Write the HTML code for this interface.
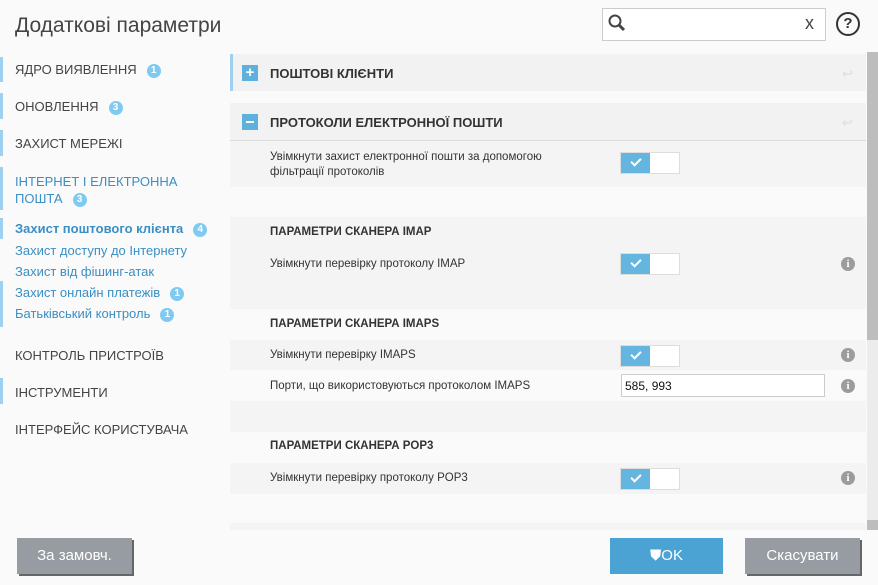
<!DOCTYPE html>
<html><head><meta charset="utf-8"><style>
*{margin:0;padding:0;box-sizing:border-box}
body{width:878px;height:585px;background:#fafafa;font-family:"Liberation Sans",sans-serif;position:relative;overflow:hidden;color:#333}
.a{position:absolute}
h1{position:absolute;left:15px;top:14px;font-size:21px;font-weight:normal;color:#444}
.nav{position:absolute;left:15px;font-size:13px;color:#444}
.bar{position:absolute;left:0;width:3px;background:#9fd0ef}
.bd{display:inline-block;width:14px;height:14px;border-radius:7px;background:#7fcaf1;color:#fff;font-size:10px;text-align:center;line-height:14px;font-weight:bold;margin-left:10px;vertical-align:1px}
.sub{position:absolute;left:15px;font-size:13px;color:#3a8fc4}
.rw{position:absolute;left:230px;width:636px}
.hd{font-size:13px;font-weight:bold;color:#333;position:absolute;left:40px}
.lbl{position:absolute;left:40px;font-size:11.5px;color:#333;line-height:15px}
.tg{position:absolute;left:620px;width:60px;height:22px;border:1px solid #ddd;background:#fff}
.tg i{position:absolute;left:0;top:0;width:29px;height:20px;background:#64b6e0}
.tg i:after{content:"";position:absolute;left:10px;top:5px;width:8px;height:4px;border-left:2px solid #fff;border-bottom:2px solid #fff;transform:rotate(-45deg)}
.inf{position:absolute;left:841px;width:14px;height:14px;border-radius:7px;background:#9c9c9c;color:#fff;font-size:11px;font-weight:bold;text-align:center;line-height:14px;font-family:"Liberation Serif",serif}
.btn{position:absolute;top:538px;height:36px;color:#fff;font-size:15px;text-align:center;line-height:36px;box-shadow:2px 2px 0 #666}
</style></head><body>
<h1>Додаткові параметри</h1>
<div class="a" style="left:602px;top:8px;width:224px;height:33px;border:1px solid #ccc;background:#fff"></div>
<svg class="a" style="left:607px;top:13px" width="22" height="22" viewBox="0 0 22 22"><circle cx="8" cy="8" r="5.5" fill="none" stroke="#444" stroke-width="2"/><path d="M12 12l5 5" stroke="#444" stroke-width="3"/></svg>
<div class="a" style="left:805px;top:13px;font-size:18px;color:#444">x</div>
<div class="a" style="left:836px;top:12px;width:24px;height:24px;border:2px solid #333;border-radius:12px;text-align:center;font-size:15px;font-weight:bold;line-height:20px;color:#333">?</div>

<div class="bar" style="top:57px;height:25px"></div><div class="nav" style="top:62px">ЯДРО ВИЯВЛЕННЯ<span class="bd">1</span></div>
<div class="bar" style="top:93px;height:26px"></div><div class="nav" style="top:99px">ОНОВЛЕННЯ<span class="bd">3</span></div>
<div class="bar" style="top:130px;height:26px"></div><div class="nav" style="top:136px">ЗАХИСТ МЕРЕЖІ</div>
<div class="bar" style="top:167px;height:43px"></div><div class="nav" style="top:173px;color:#3a8fc4;line-height:17px">ІНТЕРНЕТ І ЕЛЕКТРОННА<br>ПОШТА<span class="bd">3</span></div>
<div class="bar" style="top:218px;height:21px"></div><div class="sub" style="top:221px;font-weight:bold">Захист поштового клієнта<span class="bd">4</span></div>
<div class="sub" style="top:243px">Захист доступу до Інтернету</div>
<div class="sub" style="top:264px">Захист від фішинг-атак</div>
<div class="bar" style="top:281px;height:46px"></div>
<div class="sub" style="top:285px">Захист онлайн платежів<span class="bd">1</span></div>
<div class="sub" style="top:306px">Батьківський контроль<span class="bd">1</span></div>
<div class="nav" style="top:348px">КОНТРОЛЬ ПРИСТРОЇВ</div>
<div class="bar" style="top:378px;height:26px"></div><div class="nav" style="top:385px">ІНСТРУМЕНТИ</div>
<div class="nav" style="top:422px">ІНТЕРФЕЙС КОРИСТУВАЧА</div>

<div class="rw" style="top:54px;height:37px;background:#f2f2f2;border-left:3px solid #9fd0ef"></div>
<div class="a" style="left:242px;top:65px;width:16px;height:16px;background:#5eb1dd;color:#fff;font-weight:bold;text-align:center;line-height:16px;font-size:15px">+</div>
<div class="a hd" style="left:270px;top:66px">ПОШТОВІ КЛІЄНТИ</div>
<div class="rw" style="top:103px;height:38px;background:#f2f2f2;border-bottom:1px solid #ddd"></div>
<div class="a" style="left:242px;top:114px;width:16px;height:16px;background:#5eb1dd"><div style="margin:7px 4px;width:8px;height:2px;background:#fff"></div></div>
<div class="a hd" style="left:270px;top:115px">ПРОТОКОЛИ ЕЛЕКТРОННОЇ ПОШТИ</div>
<div class="a" style="left:842px;top:66px;color:#ddd;font-size:13px">↩</div>
<div class="a" style="left:842px;top:115px;color:#ddd;font-size:13px">↩</div>

<div class="rw" style="top:141px;height:46px;background:#f4f4f4"></div>
<div class="a lbl" style="left:270px;top:150px">Увімкнути захист електронної пошти за допомогою<br>фільтрації протоколів</div>
<div class="tg" style="top:152px"><i></i></div>

<div class="rw" style="top:217px;height:31px;background:#f4f4f4"></div>
<div class="a hd" style="left:270px;top:226px;font-size:11.5px">ПАРАМЕТРИ СКАНЕРА IMAP</div>
<div class="rw" style="top:248px;height:31px;background:#f4f4f4"></div>
<div class="a lbl" style="left:270px;top:257px">Увімкнути перевірку протоколу IMAP</div>
<div class="tg" style="top:253px"><i></i></div><div class="inf" style="top:257px">i</div>
<div class="rw" style="top:279px;height:30px;background:#f4f4f4"></div>

<div class="a hd" style="left:270px;top:318px;font-size:11.5px">ПАРАМЕТРИ СКАНЕРА IMAPS</div>
<div class="rw" style="top:340px;height:30px;background:#f4f4f4"></div>
<div class="a lbl" style="left:270px;top:348px">Увімкнути перевірку IMAPS</div>
<div class="tg" style="top:345px"><i></i></div><div class="inf" style="top:348px">i</div>
<div class="a lbl" style="left:270px;top:379px">Порти, що використовуються протоколом IMAPS</div>
<div class="a" style="left:621px;top:374px;width:204px;height:23px;border:1px solid #ccc;background:#fff;font-size:12px;padding:4px 3px;color:#111">585, 993</div>
<div class="inf" style="top:379px">i</div>
<div class="rw" style="top:401px;height:31px;background:#f4f4f4"></div>

<div class="a hd" style="left:270px;top:440px;font-size:11.5px">ПАРАМЕТРИ СКАНЕРА POP3</div>
<div class="rw" style="top:463px;height:31px;background:#f4f4f4"></div>
<div class="a lbl" style="left:270px;top:471px">Увімкнути перевірку протоколу POP3</div>
<div class="tg" style="top:468px"><i></i></div><div class="inf" style="top:471px">i</div>
<div class="rw" style="top:523px;height:7px;background:#f4f4f4"></div>

<div class="a" style="left:867px;top:52px;width:11px;height:478px;background:#ececec"></div>
<div class="a" style="left:867px;top:52px;width:11px;height:288px;background:#bdbdbd"></div>
<div class="a" style="left:867px;top:520px;width:11px;height:10px;background:#bdbdbd"></div>

<div class="btn" style="left:17px;width:115px;background:#969ca1">За замовч.</div>
<div class="btn" style="left:610px;width:113px;background:#4aa3d3;box-shadow:none">⛊OK</div>
<div class="btn" style="left:745px;width:115px;background:#969ca1">Скасувати</div>
</body></html>
